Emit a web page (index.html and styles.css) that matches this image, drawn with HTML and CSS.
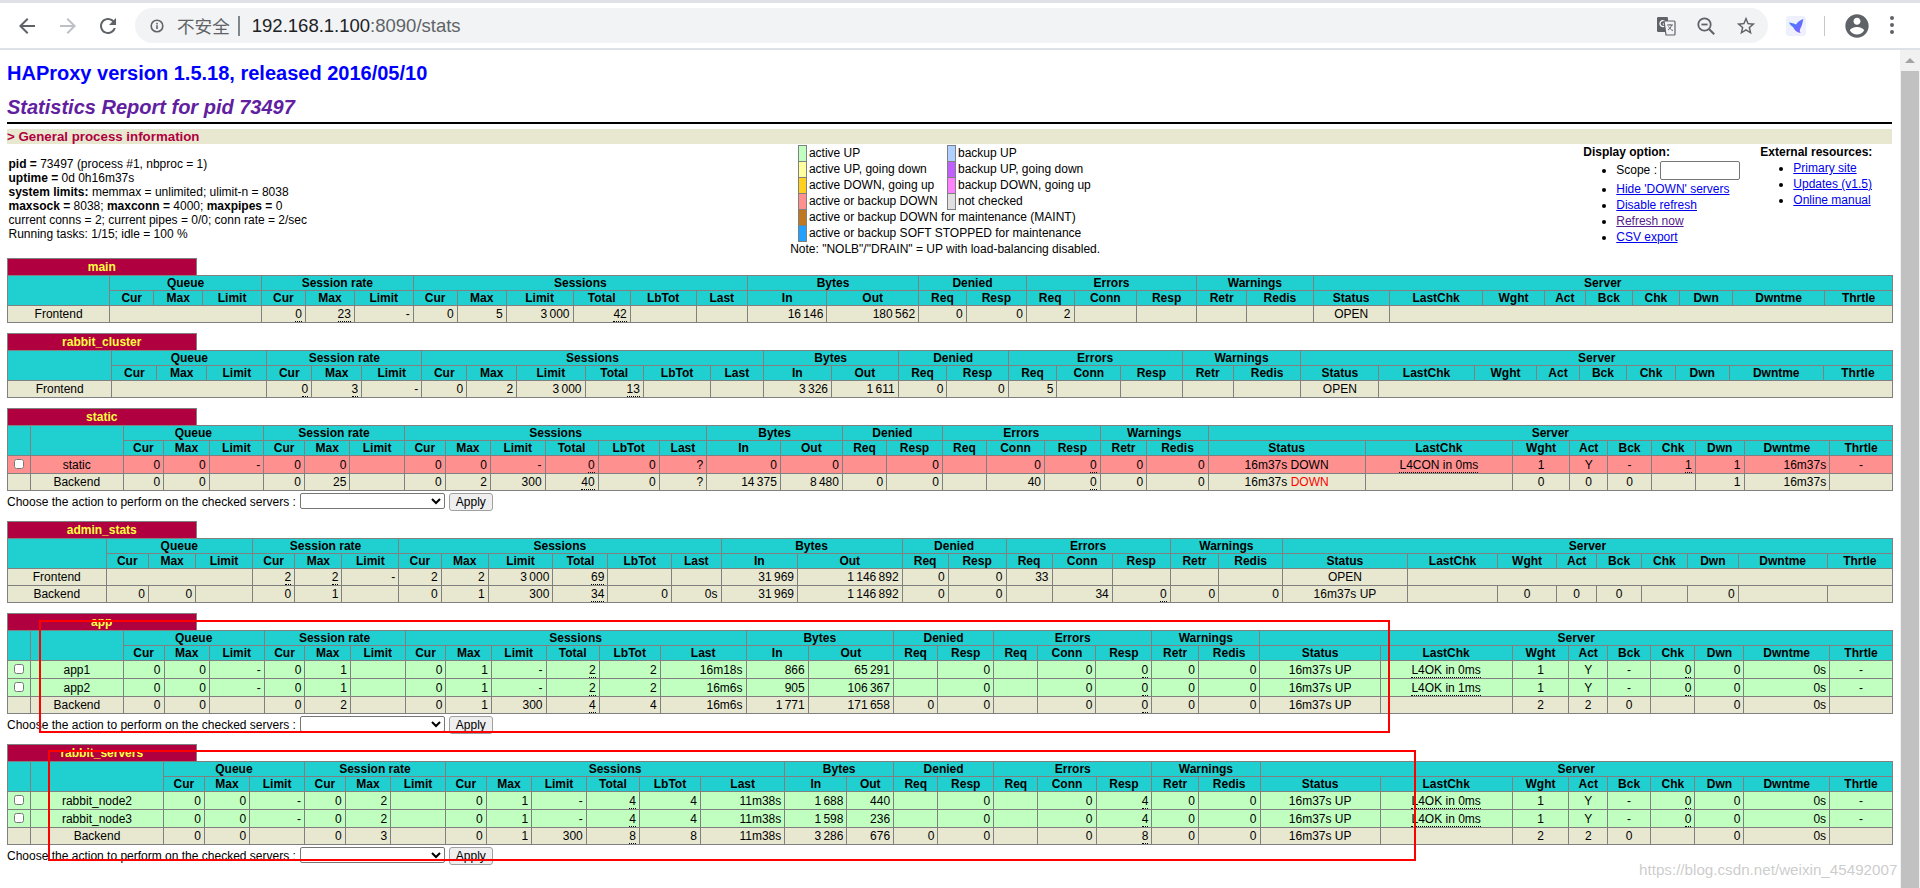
FILE: index.html
```html
<!DOCTYPE html>
<html lang="en">
<head>
<meta charset="utf-8">
<title>Statistics Report for HAProxy</title>
<link rel="stylesheet" href="styles.css">
</head>
<body>
<div class="root">
  <div class="tabstrip"></div>
  <header class="toolbar">
    <button class="navbtn" aria-label="Back"><svg class="ico24" viewBox="0 0 24 24"><path d="M20 11H7.83l5.59-5.59L12 4l-8 8 8 8 1.41-1.41L7.83 13H20v-2z"/></svg></button>
    <button class="navbtn off" aria-label="Forward"><svg class="ico24" viewBox="0 0 24 24"><path d="M12 4l-1.41 1.41L16.17 11H4v2h12.17l-5.58 5.59L12 20l8-8z"/></svg></button>
    <button class="navbtn" aria-label="Reload"><svg class="ico24" viewBox="0 0 24 24"><path d="M17.65 6.35C16.2 4.9 14.21 4 12 4c-4.42 0-7.99 3.58-7.99 8s3.57 8 7.99 8c3.73 0 6.84-2.55 7.73-6h-2.08c-.82 2.33-3.04 4-5.65 4-3.31 0-6-2.69-6-6s2.69-6 6-6c1.66 0 3.14.69 4.22 1.78L13 11h7V4l-2.35 2.35z"/></svg></button>
    <div class="omnibox">
      <svg class="ico16" viewBox="0 0 16 16"><circle cx="8" cy="8" r="5.8" fill="none" stroke="#5f6368" stroke-width="1.6"/><rect x="7.2" y="7.2" width="1.6" height="3.8" fill="#5f6368"/><rect x="7.2" y="4.8" width="1.6" height="1.6" fill="#5f6368"/></svg>
      <span class="insecure">不安全</span>
      <span class="omnisep"></span>
      <span class="url"><span class="host">192.168.1.100</span>:8090/stats</span>
      <span class="omnispacer"></span>
      <span class="omniicon"><svg class="ico20" viewBox="0 0 20 20"><rect x="1" y="1" width="11" height="15" rx="1.2" fill="#5f6368"/><path d="M9 5.4A3 3 0 1 0 9.2 9.6V8H6.8" fill="none" stroke="#fff" stroke-width="1.3"/><path d="M8 5h10a1 1 0 0 1 1 1v12a1 1 0 0 1-1 1H10z" fill="#f1f3f4" stroke="#5f6368" stroke-width="1.2"/><path d="M11 9h6M14 8v1M12 14c2-1 3-3 3.6-5M12.6 10.5c1 2 2.4 3.4 4.4 4" fill="none" stroke="#5f6368" stroke-width="1"/></svg></span>
      <span class="omniicon"><svg class="ico20" viewBox="0 0 20 20"><circle cx="8.5" cy="8.5" r="6.2" fill="none" stroke="#5f6368" stroke-width="1.8"/><path d="M13 13l5.2 5.2" stroke="#5f6368" stroke-width="2"/><path d="M5.4 8.5h6.2" stroke="#5f6368" stroke-width="1.8"/></svg></span>
      <span class="omniicon"><svg class="ico22" viewBox="0 0 24 24"><path d="M22 9.24l-7.19-.62L12 2 9.19 8.63 2 9.24l5.46 4.73L5.82 21 12 17.27 18.18 21l-1.63-7.03L22 9.24zM12 15.4l-3.76 2.27 1-4.28-3.32-2.88 4.38-.38L12 6.1l1.71 4.04 4.38.38-3.32 2.88 1 4.28L12 15.4z"/></svg></span>
    </div>
    <div class="extbadge"><svg class="ico20" viewBox="0 0 20 20"><defs><linearGradient id="bird" x1="0" y1="0" x2="1" y2="1"><stop offset="0" stop-color="#2f8bff"/><stop offset="1" stop-color="#8a55ff"/></linearGradient></defs><path d="M3 6.5C5.5 7 8 7.2 10 8.4 11.5 6.4 14 4 17.5 3 16.4 6 16.4 9 14.6 12 13.6 13.8 13.4 15.5 14.6 17 10.6 16.2 8.4 14 7.2 11.2 5.4 10.2 4 8.6 3 6.5z" fill="url(#bird)"/></svg></div>
    <span class="toolsep"></span>
    <svg class="avatar" viewBox="0 0 24 24"><path d="M12 2C6.48 2 2 6.48 2 12s4.48 10 10 10 10-4.48 10-10S17.52 2 12 2zm0 3c1.66 0 3 1.34 3 3s-1.34 3-3 3-3-1.34-3-3 1.34-3 3-3zm0 14.2c-2.5 0-4.71-1.28-6-3.22.03-1.99 4-3.08 6-3.08 1.99 0 5.97 1.09 6 3.08-1.29 1.94-3.5 3.22-6 3.22z"/></svg>
    <svg class="dots" viewBox="0 0 6 22"><circle cx="3" cy="3" r="2"/><circle cx="3" cy="10" r="2"/><circle cx="3" cy="17" r="2"/></svg>
  </header>
  <div class="toolline"></div>

  <div class="viewport">
    <main class="page">
      <h1><a href="#">HAProxy version 1.5.18, released 2016/05/10</a></h1>
      <h2>Statistics Report for pid 73497</h2>
      <hr class="hr">
      <h3>&gt; General process information</h3>
      <div class="info">
        <p class="procinfo"><b>pid = </b>73497 (process #1, nbproc = 1)<br>
        <b>uptime = </b>0d 0h16m37s<br>
        <b>system limits:</b> memmax = unlimited; ulimit-n = 8038<br>
        <b>maxsock = </b>8038; <b>maxconn = </b>4000; <b>maxpipes = </b>0<br>
        current conns = 2; current pipes = 0/0; conn rate = 2/sec<br>
        Running tasks: 1/15; idle = 100 %</p>
        <div class="legendcell">
          <table class="lgd">
            <tr><td class="s-up">&nbsp;</td><td class="nb wide">active UP</td><td class="s-bup">&nbsp;</td><td class="nb">backup UP</td></tr>
            <tr><td class="s-upd">&nbsp;</td><td class="nb wide">active UP, going down</td><td class="s-bupd">&nbsp;</td><td class="nb">backup UP, going down</td></tr>
            <tr><td class="s-dnu">&nbsp;</td><td class="nb wide">active DOWN, going up</td><td class="s-bdnu">&nbsp;</td><td class="nb">backup DOWN, going up</td></tr>
            <tr><td class="s-dn">&nbsp;</td><td class="nb wide">active or backup DOWN</td><td class="s-nc">&nbsp;</td><td class="nb">not checked</td></tr>
            <tr><td class="s-mnt">&nbsp;</td><td class="nb" colspan="3">active or backup DOWN for maintenance (MAINT)</td></tr>
            <tr><td class="s-stop">&nbsp;</td><td class="nb" colspan="3">active or backup SOFT STOPPED for maintenance</td></tr>
          </table>
          <div class="note">Note: "NOLB"/"DRAIN" = UP with load-balancing disabled.</div>
        </div>
        <div class="optcol">
          <b>Display option:</b>
          <ul>
            <li class="scope">Scope : <input class="scopein" type="text" aria-label="Scope"></li>
            <li><a href="#">Hide 'DOWN' servers</a></li>
            <li><a href="#">Disable refresh</a></li>
            <li><a class="visited" href="#">Refresh now</a></li>
            <li><a href="#">CSV export</a></li>
          </ul>
        </div>
        <div class="optcol">
          <b>External resources:</b>
          <ul>
            <li><a href="#">Primary site</a></li>
            <li><a href="#">Updates (v1.5)</a></li>
            <li><a href="#">Online manual</a></li>
          </ul>
        </div>
      </div>

      <section class="proxy">
        <table class="tbl"><tr><th class="pxname">main</th><th class="empty"></th></tr></table>
        <table class="tbl">
          <tr class="titre"><th rowspan="2"></th><th colspan="3">Queue</th><th colspan="3">Session rate</th><th colspan="6">Sessions</th><th colspan="2">Bytes</th><th colspan="2">Denied</th><th colspan="3">Errors</th><th colspan="2">Warnings</th><th colspan="9">Server</th></tr>
          <tr class="titre"><th>Cur</th><th>Max</th><th>Limit</th><th>Cur</th><th>Max</th><th>Limit</th><th>Cur</th><th>Max</th><th>Limit</th><th>Total</th><th>LbTot</th><th>Last</th><th>In</th><th>Out</th><th>Req</th><th>Resp</th><th>Req</th><th>Conn</th><th>Resp</th><th>Retr</th><th>Redis</th><th>Status</th><th>LastChk</th><th>Wght</th><th>Act</th><th>Bck</th><th>Chk</th><th>Dwn</th><th>Dwntme</th><th>Thrtle</th></tr>
          <tr class="fe"><td class="c">Frontend</td><td colspan="3"></td><td><u>0</u></td><td><u>23</u></td><td>-</td><td>0</td><td>5</td><td class="g">3 000</td><td><u>42</u></td><td></td><td></td><td class="g">16 146</td><td class="g">180 562</td><td>0</td><td>0</td><td>2</td><td></td><td></td><td></td><td></td><td class="c">OPEN</td><td colspan="8"></td></tr>
        </table>
      </section>

      <section class="proxy">
        <table class="tbl"><tr><th class="pxname">rabbit_cluster</th><th class="empty"></th></tr></table>
        <table class="tbl">
          <tr class="titre"><th rowspan="2"></th><th colspan="3">Queue</th><th colspan="3">Session rate</th><th colspan="6">Sessions</th><th colspan="2">Bytes</th><th colspan="2">Denied</th><th colspan="3">Errors</th><th colspan="2">Warnings</th><th colspan="9">Server</th></tr>
          <tr class="titre"><th>Cur</th><th>Max</th><th>Limit</th><th>Cur</th><th>Max</th><th>Limit</th><th>Cur</th><th>Max</th><th>Limit</th><th>Total</th><th>LbTot</th><th>Last</th><th>In</th><th>Out</th><th>Req</th><th>Resp</th><th>Req</th><th>Conn</th><th>Resp</th><th>Retr</th><th>Redis</th><th>Status</th><th>LastChk</th><th>Wght</th><th>Act</th><th>Bck</th><th>Chk</th><th>Dwn</th><th>Dwntme</th><th>Thrtle</th></tr>
          <tr class="fe"><td class="c">Frontend</td><td colspan="3"></td><td><u>0</u></td><td><u>3</u></td><td>-</td><td>0</td><td>2</td><td class="g">3 000</td><td><u>13</u></td><td></td><td></td><td class="g">3 326</td><td class="g">1 611</td><td>0</td><td>0</td><td>5</td><td></td><td></td><td></td><td></td><td class="c">OPEN</td><td colspan="8"></td></tr>
        </table>
      </section>

      <section class="proxy">
        <table class="tbl"><tr><th class="pxname">static</th><th class="empty"></th></tr></table>
        <table class="tbl">
          <tr class="titre"><th class="ck" rowspan="2"></th><th rowspan="2"></th><th colspan="3">Queue</th><th colspan="3">Session rate</th><th colspan="6">Sessions</th><th colspan="2">Bytes</th><th colspan="2">Denied</th><th colspan="3">Errors</th><th colspan="2">Warnings</th><th colspan="9">Server</th></tr>
          <tr class="titre"><th>Cur</th><th>Max</th><th>Limit</th><th>Cur</th><th>Max</th><th>Limit</th><th>Cur</th><th>Max</th><th>Limit</th><th>Total</th><th>LbTot</th><th>Last</th><th>In</th><th>Out</th><th>Req</th><th>Resp</th><th>Req</th><th>Conn</th><th>Resp</th><th>Retr</th><th>Redis</th><th>Status</th><th>LastChk</th><th>Wght</th><th>Act</th><th>Bck</th><th>Chk</th><th>Dwn</th><th>Dwntme</th><th>Thrtle</th></tr>
          <tr class="down"><td class="c"><input class="chk" type="checkbox" aria-label="select"></td><td class="c">static</td><td>0</td><td>0</td><td>-</td><td>0</td><td>0</td><td></td><td>0</td><td>0</td><td>-</td><td><u>0</u></td><td>0</td><td>?</td><td>0</td><td>0</td><td></td><td>0</td><td></td><td>0</td><td><u>0</u></td><td>0</td><td>0</td><td class="c">16m37s DOWN</td><td class="c"><u>L4CON in 0ms</u></td><td class="c">1</td><td class="c">Y</td><td class="c">-</td><td><u>1</u></td><td>1</td><td>16m37s</td><td class="c">-</td></tr>
          <tr class="fe"><td></td><td class="c">Backend</td><td>0</td><td>0</td><td></td><td>0</td><td>25</td><td></td><td>0</td><td>2</td><td>300</td><td><u>40</u></td><td>0</td><td>?</td><td class="g">14 375</td><td class="g">8 480</td><td>0</td><td>0</td><td></td><td>40</td><td><u>0</u></td><td>0</td><td>0</td><td class="c">16m37s <span class="red">DOWN</span></td><td></td><td class="c">0</td><td class="c">0</td><td class="c">0</td><td></td><td>1</td><td>16m37s</td><td></td></tr>
        </table>
        <form class="actions">Choose the action to perform on the checked servers : <select class="actsel" aria-label="action"><option></option></select><input class="apply" type="button" value="Apply"></form>
      </section>

      <section class="proxy">
        <table class="tbl"><tr><th class="pxname">admin_stats</th><th class="empty"></th></tr></table>
        <table class="tbl">
          <tr class="titre"><th rowspan="2"></th><th colspan="3">Queue</th><th colspan="3">Session rate</th><th colspan="6">Sessions</th><th colspan="2">Bytes</th><th colspan="2">Denied</th><th colspan="3">Errors</th><th colspan="2">Warnings</th><th colspan="9">Server</th></tr>
          <tr class="titre"><th>Cur</th><th>Max</th><th>Limit</th><th>Cur</th><th>Max</th><th>Limit</th><th>Cur</th><th>Max</th><th>Limit</th><th>Total</th><th>LbTot</th><th>Last</th><th>In</th><th>Out</th><th>Req</th><th>Resp</th><th>Req</th><th>Conn</th><th>Resp</th><th>Retr</th><th>Redis</th><th>Status</th><th>LastChk</th><th>Wght</th><th>Act</th><th>Bck</th><th>Chk</th><th>Dwn</th><th>Dwntme</th><th>Thrtle</th></tr>
          <tr class="fe"><td class="c">Frontend</td><td colspan="3"></td><td><u>2</u></td><td><u>2</u></td><td>-</td><td>2</td><td>2</td><td class="g">3 000</td><td><u>69</u></td><td></td><td></td><td class="g">31 969</td><td class="g">1 146 892</td><td>0</td><td>0</td><td>33</td><td></td><td></td><td></td><td></td><td class="c">OPEN</td><td colspan="8"></td></tr>
          <tr class="fe"><td class="c">Backend</td><td>0</td><td>0</td><td></td><td>0</td><td>1</td><td></td><td>0</td><td>1</td><td>300</td><td><u>34</u></td><td>0</td><td>0s</td><td class="g">31 969</td><td class="g">1 146 892</td><td>0</td><td>0</td><td></td><td>34</td><td><u>0</u></td><td>0</td><td>0</td><td class="c">16m37s UP</td><td></td><td class="c">0</td><td class="c">0</td><td class="c">0</td><td></td><td>0</td><td></td><td></td></tr>
        </table>
      </section>

      <section class="proxy">
        <table class="tbl"><tr><th class="pxname">app</th><th class="empty"></th></tr></table>
        <table class="tbl">
          <tr class="titre"><th class="ck" rowspan="2"></th><th rowspan="2"></th><th colspan="3">Queue</th><th colspan="3">Session rate</th><th colspan="6">Sessions</th><th colspan="2">Bytes</th><th colspan="2">Denied</th><th colspan="3">Errors</th><th colspan="2">Warnings</th><th colspan="9">Server</th></tr>
          <tr class="titre"><th>Cur</th><th>Max</th><th>Limit</th><th>Cur</th><th>Max</th><th>Limit</th><th>Cur</th><th>Max</th><th>Limit</th><th>Total</th><th>LbTot</th><th>Last</th><th>In</th><th>Out</th><th>Req</th><th>Resp</th><th>Req</th><th>Conn</th><th>Resp</th><th>Retr</th><th>Redis</th><th>Status</th><th>LastChk</th><th>Wght</th><th>Act</th><th>Bck</th><th>Chk</th><th>Dwn</th><th>Dwntme</th><th>Thrtle</th></tr>
          <tr class="up"><td class="c"><input class="chk" type="checkbox" aria-label="select"></td><td class="c">app1</td><td>0</td><td>0</td><td>-</td><td>0</td><td>1</td><td></td><td>0</td><td>1</td><td>-</td><td><u>2</u></td><td>2</td><td>16m18s</td><td>866</td><td class="g">65 291</td><td></td><td>0</td><td></td><td>0</td><td><u>0</u></td><td>0</td><td>0</td><td class="c">16m37s UP</td><td class="c"><u>L4OK in 0ms</u></td><td class="c">1</td><td class="c">Y</td><td class="c">-</td><td><u>0</u></td><td>0</td><td>0s</td><td class="c">-</td></tr>
          <tr class="up"><td class="c"><input class="chk" type="checkbox" aria-label="select"></td><td class="c">app2</td><td>0</td><td>0</td><td>-</td><td>0</td><td>1</td><td></td><td>0</td><td>1</td><td>-</td><td><u>2</u></td><td>2</td><td>16m6s</td><td>905</td><td class="g">106 367</td><td></td><td>0</td><td></td><td>0</td><td><u>0</u></td><td>0</td><td>0</td><td class="c">16m37s UP</td><td class="c"><u>L4OK in 1ms</u></td><td class="c">1</td><td class="c">Y</td><td class="c">-</td><td><u>0</u></td><td>0</td><td>0s</td><td class="c">-</td></tr>
          <tr class="fe"><td></td><td class="c">Backend</td><td>0</td><td>0</td><td></td><td>0</td><td>2</td><td></td><td>0</td><td>1</td><td>300</td><td><u>4</u></td><td>4</td><td>16m6s</td><td class="g">1 771</td><td class="g">171 658</td><td>0</td><td>0</td><td></td><td>0</td><td><u>0</u></td><td>0</td><td>0</td><td class="c">16m37s UP</td><td></td><td class="c">2</td><td class="c">2</td><td class="c">0</td><td></td><td>0</td><td>0s</td><td></td></tr>
        </table>
        <form class="actions">Choose the action to perform on the checked servers : <select class="actsel" aria-label="action"><option></option></select><input class="apply" type="button" value="Apply"></form>
      </section>

      <section class="proxy">
        <table class="tbl"><tr><th class="pxname">rabbit_servers</th><th class="empty"></th></tr></table>
        <table class="tbl">
          <tr class="titre"><th class="ck" rowspan="2"></th><th rowspan="2"></th><th colspan="3">Queue</th><th colspan="3">Session rate</th><th colspan="6">Sessions</th><th colspan="2">Bytes</th><th colspan="2">Denied</th><th colspan="3">Errors</th><th colspan="2">Warnings</th><th colspan="9">Server</th></tr>
          <tr class="titre"><th>Cur</th><th>Max</th><th>Limit</th><th>Cur</th><th>Max</th><th>Limit</th><th>Cur</th><th>Max</th><th>Limit</th><th>Total</th><th>LbTot</th><th>Last</th><th>In</th><th>Out</th><th>Req</th><th>Resp</th><th>Req</th><th>Conn</th><th>Resp</th><th>Retr</th><th>Redis</th><th>Status</th><th>LastChk</th><th>Wght</th><th>Act</th><th>Bck</th><th>Chk</th><th>Dwn</th><th>Dwntme</th><th>Thrtle</th></tr>
          <tr class="up"><td class="c"><input class="chk" type="checkbox" aria-label="select"></td><td class="c">rabbit_node2</td><td>0</td><td>0</td><td>-</td><td>0</td><td>2</td><td></td><td>0</td><td>1</td><td>-</td><td><u>4</u></td><td>4</td><td>11m38s</td><td class="g">1 688</td><td>440</td><td></td><td>0</td><td></td><td>0</td><td><u>4</u></td><td>0</td><td>0</td><td class="c">16m37s UP</td><td class="c"><u>L4OK in 0ms</u></td><td class="c">1</td><td class="c">Y</td><td class="c">-</td><td><u>0</u></td><td>0</td><td>0s</td><td class="c">-</td></tr>
          <tr class="up"><td class="c"><input class="chk" type="checkbox" aria-label="select"></td><td class="c">rabbit_node3</td><td>0</td><td>0</td><td>-</td><td>0</td><td>2</td><td></td><td>0</td><td>1</td><td>-</td><td><u>4</u></td><td>4</td><td>11m38s</td><td class="g">1 598</td><td>236</td><td></td><td>0</td><td></td><td>0</td><td><u>4</u></td><td>0</td><td>0</td><td class="c">16m37s UP</td><td class="c"><u>L4OK in 0ms</u></td><td class="c">1</td><td class="c">Y</td><td class="c">-</td><td><u>0</u></td><td>0</td><td>0s</td><td class="c">-</td></tr>
          <tr class="fe"><td></td><td class="c">Backend</td><td>0</td><td>0</td><td></td><td>0</td><td>3</td><td></td><td>0</td><td>1</td><td>300</td><td><u>8</u></td><td>8</td><td>11m38s</td><td class="g">3 286</td><td>676</td><td>0</td><td>0</td><td></td><td>0</td><td><u>8</u></td><td>0</td><td>0</td><td class="c">16m37s UP</td><td></td><td class="c">2</td><td class="c">2</td><td class="c">0</td><td></td><td>0</td><td>0s</td><td></td></tr>
        </table>
        <form class="actions">Choose the action to perform on the checked servers : <select class="actsel" aria-label="action"><option></option></select><input class="apply" type="button" value="Apply"></form>
      </section>
    </main>
    <aside class="scrollbar"><div class="scrollup"><span class="arrow"></span></div><div class="thumb"></div></aside>
  </div>

  <div class="mark mark-app"></div>
  <div class="mark mark-rabbit"></div>
  <div class="watermark">https://blog.csdn.net/weixin_45492007</div>
</div>
</body>
</html>
```
FILE: styles.css
```css
* { box-sizing: content-box; }
html, body { margin: 0; padding: 0; height: 888px; overflow: hidden; background: #fff; }
body { font-family: "Liberation Sans", Arial, "Noto Sans CJK SC", sans-serif; font-size: 12px; color: #000; }
.root { position: relative; display: flex; flex-direction: column; height: 888px; overflow: hidden; }

/* browser chrome */
.tabstrip { height: 3px; background: #dee1e6; flex: none; }
.toolbar { height: 45px; flex: none; display: flex; align-items: center; padding-left: 7px; background: #fff; }
.toolline { height: 2px; background: #dee1e6; flex: none; }
.navbtn { width: 40.5px; height: 35px; padding: 0; border: 0; background: none; display: flex; align-items: center; justify-content: center; flex: none; fill: #5f6368; }
.navbtn.off { fill: #bdc1c6; }
.ico24 { width: 24px; height: 24px; display: block; }
.ico16 { width: 16px; height: 16px; flex: none; }
.ico20 { width: 20px; height: 20px; display: block; }
.ico22 { width: 22px; height: 22px; display: block; fill: #5f6368; }
.omnibox { margin-left: 6.5px; width: 1633px; height: 35px; flex: none; border-radius: 18px; background: #f1f3f4; display: flex; align-items: center; padding-left: 14px; box-sizing: border-box; padding-right: 2px; font-size: 18.5px; }
.insecure { margin-left: 12px; color: #5f6368; font-size: 17.6px; }
.omnisep { width: 2px; height: 20px; background: #80868b; margin: 0 12px 0 8px; }
.url { color: #5f6368; white-space: nowrap; }
.host { color: #202124; }
.omnispacer { flex: 1; }
.omniicon { width: 40px; display: flex; justify-content: center; align-items: center; }
.extbadge { margin-left: 18px; width: 20px; height: 20px; border-radius: 3px; background: #eef1fd; flex: none; }
.toolsep { width: 1px; height: 20px; background: #c4c7cc; margin-left: 18px; flex: none; }
.avatar { width: 28px; height: 28px; fill: #5f6368; margin-left: 18px; flex: none; }
.dots { width: 6px; height: 22px; fill: #5f6368; margin-left: 18px; flex: none; }

/* page frame */
.viewport { flex: 1; display: flex; min-height: 0; }
.page { width: 1885px; flex: none; padding: 0 8px 0 7px; overflow: hidden; }
.scrollbar { width: 20px; flex: none; background: #f1f1f1; display: flex; flex-direction: column; }
.scrollup { height: 21px; display: flex; justify-content: center; align-items: center; flex: none; }
.arrow { width: 0; height: 0; border: 5px solid transparent; border-top: 0; border-bottom: 5px solid #a3a3a3; }
.thumb { flex: 1; background: #c1c1c1; margin: 0 1px 0 1px; }

/* headings */
h1 { font-size: 20px; line-height: 23px; font-weight: bold; margin: 12px 0 11px; }
h1 a { color: #00f; text-decoration: none; }
h2 { font-size: 20px; line-height: 23px; font-weight: bold; font-style: italic; color: #6020a0; margin: 0; }
.hr { margin: 3px 0 0; height: 0; border: 0; border-bottom: 2px solid #000; width: 100%; }
h3 { font-size: 13.3px; line-height: 15px; height: 15px; font-weight: bold; color: #b00040; background: #e8e8d0; margin: 5px 0 0; width: 1885px; }

/* process info */
.info { display: grid; grid-template-columns: auto 1fr auto auto; height: 114px; }
.procinfo { margin: 0; padding: 0 0 4px 1.5px; align-self: center; line-height: 14px; white-space: nowrap; }
.legendcell { display: flex; flex-direction: column; align-items: center; padding-top: 1px; }
.lgd { border-collapse: collapse; }
.lgd td { border: 1px solid gray; padding: 2px; line-height: 11px; font-size: 12px; width: 3.4px; }
.lgd td.nb { border: 0; white-space: nowrap; width: auto; }
.lgd td.wide { padding-right: 9px; }
.note { white-space: nowrap; line-height: 14px; }
.s-up { background: #c0ffc0; } .s-upd { background: #ffffa0; } .s-dnu { background: #ffd020; } .s-dn { background: #ff9090; }
.s-mnt { background: #c07820; } .s-stop { background: #20a0ff; }
.s-bup { background: #b0d0ff; } .s-bupd { background: #c060ff; } .s-bdnu { background: #ff80ff; } .s-nc { background: #e0e0e0; }
.optcol { padding-top: 1px; line-height: 14px; white-space: nowrap; }
.optcol ul { margin: 0; padding-left: 33px; }
.optcol li { margin: 2px 20px 0 0; }
.scope { height: 19px; line-height: 18px; }
.scopein { width: 78px; height: 17px; padding: 0; margin: 0; border: 1px solid #767676; border-radius: 2px; vertical-align: top; background: #fff; }
a { color: #00e; }
a.visited { color: #551a8b; }

/* proxy tables */
.proxy { margin-bottom: 10px; }
.tbl { width: 100%; border-collapse: collapse; font-size: 12px; }
.tbl td { border: 1px solid gray; padding: 2px 3px; line-height: 12px; white-space: nowrap; text-align: right; font-size: 12px; }
.tbl td.c { text-align: center; }
.tbl td.g { word-spacing: -1px; }
.tbl th { border: 1px solid gray; padding: 1px; line-height: 12px; font-size: 12px; }
.tbl th.ck { width: 1%; }
.tbl th.pxname { width: 10%; background: #b00040; color: #ffff40; border-bottom: 0; padding: 2px 3px; white-space: nowrap; }
.tbl th.empty { width: 90%; border: 0; background: #fff; }
.titre th { background: #20d0d0; color: #000; font-weight: bold; text-align: center; }
.fe td { background: #e8e8d0; }
.up td { background: #c0ffc0; }
.down td { background: #ff9090; }
.red { color: #f00; }
u { text-decoration: none; border-bottom: 1px dotted #000; }
.chk { width: 10px; height: 10px; margin: 1px 3px 2px 3px; display: inline-block; vertical-align: top; }

.actions { display: flex; align-items: flex-start; height: 18px; padding-top: 2px; line-height: 18px; white-space: nowrap; }
.actsel { width: 145px; height: 16px; margin: 0 0 0 4px; padding: 0; box-sizing: border-box; font-size: 12px; font-family: inherit; background: #fff; border: 1px solid #767676; border-radius: 2px; }
.apply { width: 44px; height: 18px; margin: 0 0 0 4px; padding: 0; box-sizing: border-box; font-size: 12px; font-family: inherit; background: #efefef; border: 1px solid #a0a0a0; border-radius: 3px; color: #000; }

/* overlays: annotation boxes and watermark drawn over the screenshot */
.mark { position: absolute; box-sizing: border-box; border: 2px solid #f00; pointer-events: none; }
.mark-app { left: 39px; top: 620px; width: 1351px; height: 113px; }
.mark-rabbit { left: 48px; top: 750px; width: 1368px; height: 111px; }
.watermark { position: absolute; left: 1639px; top: 861px; font-size: 15.2px; line-height: 18px; color: rgba(175, 175, 175, .65); text-shadow: 0 0 1px rgba(255,255,255,.8); white-space: nowrap; }
```
